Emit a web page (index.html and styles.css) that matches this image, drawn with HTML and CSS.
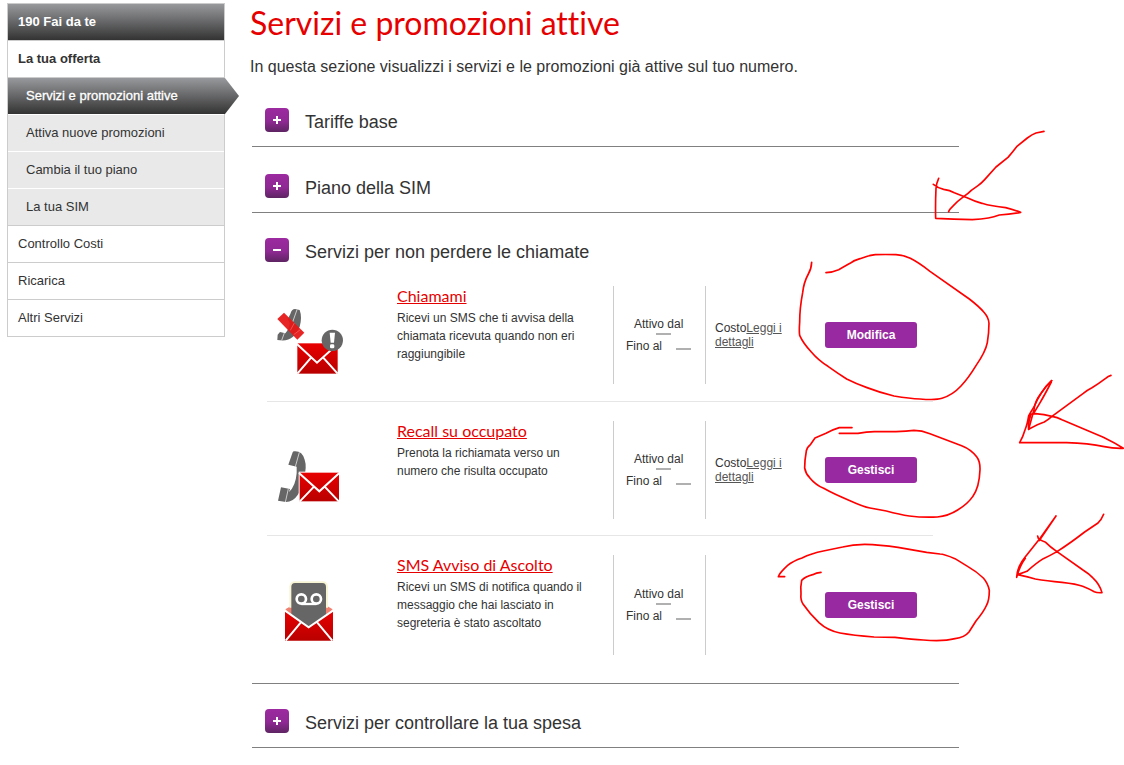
FILE: index.html
```html
<!DOCTYPE html>
<html lang="it">
<head>
<meta charset="utf-8">
<title>Servizi e promozioni attive</title>
<link rel="stylesheet" href="styles.css">
</head>
<body>
<div class="page">
  <nav class="menu" aria-label="190 Fai da te">
    <ul class="menu-list">
      <li class="menu-item menu-head"><a href="#">190 Fai da te</a></li>
      <li class="menu-item menu-strong"><a href="#">La tua offerta</a></li>
      <li class="menu-item menu-sub menu-current"><a href="#" aria-current="page">Servizi e promozioni attive</a></li>
      <li class="menu-item menu-sub"><a href="#">Attiva nuove promozioni</a></li>
      <li class="menu-item menu-sub"><a href="#">Cambia il tuo piano</a></li>
      <li class="menu-item menu-sub menu-sub-last"><a href="#">La tua SIM</a></li>
      <li class="menu-item"><a href="#">Controllo Costi</a></li>
      <li class="menu-item"><a href="#">Ricarica</a></li>
      <li class="menu-item"><a href="#">Altri Servizi</a></li>
    </ul>
  </nav>

  <main class="content">
    <h1 class="title">Servizi e promozioni attive</h1>
    <p class="intro">In questa sezione visualizzi i servizi e le promozioni già attive sul tuo numero.</p>

    <div class="sections">
      <section class="section section-tall">
        <div class="section-head">
          <button class="toggle" type="button" aria-label="Apri Tariffe base"><svg viewBox="0 0 8 8"><path d="M4 0V8M0 4H8"/></svg></button>
          <h2 class="section-title">Tariffe base</h2>
        </div>
      </section>
      <section class="section section-tall">
        <div class="section-head">
          <button class="toggle" type="button" aria-label="Apri Piano della SIM"><svg viewBox="0 0 8 8"><path d="M4 0V8M0 4H8"/></svg></button>
          <h2 class="section-title">Piano della SIM</h2>
        </div>
      </section>
      <section class="section section-open">
        <div class="section-head">
          <button class="toggle" type="button" aria-label="Chiudi Servizi per non perdere le chiamate"><svg viewBox="0 0 8 8"><path d="M0 4H8"/></svg></button>
          <h2 class="section-title">Servizi per non perdere le chiamate</h2>
        </div>

        <div class="services">
          <article class="service">
            <div class="service-icon">
              <svg viewBox="6 0 270 252" aria-hidden="true">
                <defs>
                  <linearGradient id="red" x1="0" y1="0" x2="0" y2="1"><stop offset="0" stop-color="#e80000"/><stop offset="1" stop-color="#b90000"/></linearGradient>
                </defs>
                <path fill="#666" d="M76 42Q80 27 90 27L104 30Q112 52 104 80Q92 104 82 112Q68 125 37 120L38 104L45 96L61 100Q72 88 74 70L68 58Z"/>
                <path stroke="#fff" stroke-width="2" fill="none" d="M96 29L83 66M58 99L50 121"/>
                <path fill="#e71717" opacity=".94" d="M37 57L57 38L118 98L97 119Z"/>
                <path fill="none" stroke="#f16b6b" stroke-width="2" d="M76 91L88 69M86 104L106 89"/>
                <rect x="97" y="130" width="121" height="91" fill="url(#red)"/>
                <path fill="none" stroke="#fff" stroke-width="6" d="M95 131L156 188L219 131M97 221L139 172M218 221L174 172"/>
                <circle cx="202" cy="121" r="32" fill="#666"/>
                <path fill="#fff" d="M194 98H210L207 128H197Z"/><rect x="195" y="133" width="13" height="12" rx="4" fill="#fff"/>
              </svg>
            </div>
            <div class="service-text">
              <h3 class="service-name"><a href="#">Chiamami</a></h3>
              <p>Ricevi un SMS che ti avvisa della chiamata ricevuta quando non eri raggiungibile</p>
            </div>
            <div class="service-dates">
              <p class="date-start">Attivo dal<span class="dash"></span></p>
              <p class="date-end">Fino al<span class="dash"></span></p>
            </div>
            <div class="service-cost"><p>Costo<a href="#">Leggi i dettagli</a></p></div>
            <div class="service-action"><button class="action" type="button">Modifica</button></div>
          </article>

          <article class="service">
            <div class="service-icon">
              <svg viewBox="6 -18 270 252" aria-hidden="true">
                <path fill="#666" d="M83 34Q84 29 91 31Q112 31 119 56Q126 77 117 110Q110 145 98 162Q84 183 63 183L39 179L48 139L75 144L72 153Q92 135 95 96V77L70 71Z"/>
                <path stroke="#fff" stroke-width="2" fill="none" d="M103 34L91 77M70 143L61 184"/>
                <rect x="101" y="92" width="124" height="92" fill="#fff"/>
                <rect x="104" y="95" width="118" height="86" fill="url(#red)"/>
                <path fill="none" stroke="#fff" stroke-width="6" d="M102 96L163 151L223 96M104 182L147 137M222 182L179 137"/>
              </svg>
            </div>
            <div class="service-text">
              <h3 class="service-name"><a href="#">Recall su occupato</a></h3>
              <p>Prenota la richiamata verso un numero che risulta occupato</p>
            </div>
            <div class="service-dates">
              <p class="date-start">Attivo dal<span class="dash"></span></p>
              <p class="date-end">Fino al<span class="dash"></span></p>
            </div>
            <div class="service-cost"><p>Costo<a href="#">Leggi i dettagli</a></p></div>
            <div class="service-action"><button class="action" type="button">Gestisci</button></div>
          </article>

          <article class="service">
            <div class="service-icon">
              <svg viewBox="6 -15 270 252" aria-hidden="true">
                <path fill="#f08070" d="M61 103L82 91H182L203 103L190 120H72Z"/>
                <path fill="url(#red)" d="M60 108L131 158L204 108V197H60Z"/>
                <path fill="#f8f5d5" d="M73 34Q75 19 91 19H173Q187 19 189 34V98H73Z"/>
                <path fill="#666" d="M79 36Q79 24 90 24H172Q183 24 183 36V122L132 157L79 120Z"/>
                <path fill="none" stroke="#fff" stroke-width="6" d="M59 106L131 157L205 106M62 197L107 143M202 197L157 143"/>
                <path fill="none" stroke="#fff" stroke-width="7" d="M109 87H154"/>
                <circle cx="109" cy="72" r="14" fill="#666" stroke="#fff" stroke-width="8"/>
                <circle cx="154" cy="72" r="14" fill="#666" stroke="#fff" stroke-width="8"/>
              </svg>
            </div>
            <div class="service-text">
              <h3 class="service-name"><a href="#">SMS Avviso di Ascolto</a></h3>
              <p>Ricevi un SMS di notifica quando il messaggio che hai lasciato in segreteria è stato ascoltato</p>
            </div>
            <div class="service-dates">
              <p class="date-start">Attivo dal<span class="dash"></span></p>
              <p class="date-end">Fino al<span class="dash"></span></p>
            </div>
            <div class="service-cost"></div>
            <div class="service-action"><button class="action" type="button">Gestisci</button></div>
          </article>
        </div>
      </section>
      <section class="section">
        <div class="section-head">
          <button class="toggle" type="button" aria-label="Apri Servizi per controllare la tua spesa"><svg viewBox="0 0 8 8"><path d="M4 0V8M0 4H8"/></svg></button>
          <h2 class="section-title">Servizi per controllare la tua spesa</h2>
        </div>
      </section>
    </div>
  </main>

  <!-- Freehand red marks over the page -->
  <svg class="marks" viewBox="0 0 1124 765" aria-hidden="true">
    <g transform="translate(780 120) scale(.3333)">
      <path d="M792 34L768 39Q757 43 742 54L710 80Q697 97 684 112L648 141L614 179Q604 190 594 197L574 211Q564 221 551 230Q533 243 518 259Q509 267 506 275"/>
      <path d="M476 175Q469 190 468 206Q466 250 467 295Q520 298 577 299Q605 298 625 294Q642 291 658 285Q690 283 722 277Q700 269 677 263Q635 259 606 250Q585 245 565 235L523 218Q510 211 491 208Q474 204 460 193"/>
      <path d="M95 427Q94 448 85 462Q71 488 68 518Q59 565 59 607Q57 635 59 646Q69 669 94 696Q115 721 144 739Q172 759 200 777Q230 792 261 803Q300 818 342 828Q390 836 420 837Q467 841 486 835Q518 825 543 798Q565 775 588 737Q617 695 622 668Q627 638 627 610Q626 593 612 577Q598 560 568 537L450 454Q415 427 391 415Q370 405 348 404Q316 403 286 404Q266 406 240 416Q222 421 210 430Q189 442 176 449Q157 457 138 458"/>
    </g>
    <g transform="translate(770 370) scale(.3333)">
      <path d="M1023 16Q1015 18 1007 25Q986 41 966 53Q952 60 940 70L846 139Q832 151 823 156Q805 162 776 178Q774 154 783 133Q788 131 796 131Q823 133 846 139Q862 142 876 149L1000 202Q1035 219 1060 235Q1030 236 1003 230Q955 220 890 218H749Q759 201 765 180Q772 164 776 138Q784 123 792 111Q812 63 845 32"/>
      <path d="M845 32Q827 48 811 73Q795 94 792 119L776 178M844 36Q824 75 809 100L791 130"/>
      <path d="M246 173H208Q190 178 168 190L135 204Q126 217 122 223Q110 233 109 243Q104 270 104 294Q107 311 119 323Q136 344 161 355Q195 374 240 392Q280 410 300 414L349 423Q390 434 418 438Q458 443 502 441Q535 438 563 420Q593 402 608 380Q628 353 630 300Q631 274 620 260Q603 238 575 227L480 191Q455 181 432 181Q410 184 378 185H313Q290 185 264 190H208"/>
      <path d="M153 607Q139 608 128 614Q106 620 95 631Q91 650 93 671Q91 690 99 702Q118 730 147 758Q173 782 210 789Q250 796 312 801L375 802Q430 808 460 810Q520 815 555 806Q584 802 597 786L618 753Q642 724 650 705Q658 691 658 661Q654 640 640 624Q620 605 594 590L555 566Q522 552 510 552L470 547L384 532Q330 524 284 523Q248 523 218 531L160 543Q124 550 96 564Q69 573 53 586Q28 609 25 620H44"/>
      <path d="M1001 433Q995 449 983 460L944 486Q900 520 861 545Q842 556 820 566Q798 580 771 604Q757 609 743 614Q771 620 796 627Q830 633 876 637Q920 642 938 649Q960 658 973 665Q981 669 996 668Q990 644 968 623Q958 612 939 600L861 545Q840 530 827 517Q813 512 805 505L803 498M808 512L858 438L811 504L765 562Q742 590 740 622Q749 588 766 565"/>
    </g>
  </svg>
</div>
</body>
</html>
```
FILE: styles.css
```css
* {
  box-sizing: border-box;
}

body {
  margin: 0;
  background: #fff;
  color: #333;
  font: 12px/18px "Liberation Sans", Arial, sans-serif;
}

h1, h2, h3, p, ul {
  margin: 0;
  padding: 0;
  font-weight: normal;
}

.page {
  position: relative;
  display: flex;
  align-items: flex-start;
  gap: 25px;
  padding: 3px 165px 0 7px;
}

/* Side menu */
.menu {
  flex: 0 0 218px;
}

.menu-list {
  list-style: none;
  border: 1px solid #ccc;
  border-bottom: 0;
}

.menu-item {
  border-bottom: 1px solid #ccc;
}

.menu-item a {
  display: block;
  padding: 0 10px;
  color: #333;
  font-size: 13px;
  line-height: 36px;
  text-decoration: none;
}

.menu-item.menu-head a,
.menu-item.menu-current a {
  background: linear-gradient(#98999c, #333);
  color: #fff;
}

.menu-head a,
.menu-strong a {
  font-weight: bold;
}

.menu-sub {
  border-bottom-color: #fff;
}

.menu-item.menu-sub a {
  padding-left: 18px;
}

.menu-sub:not(.menu-current) a {
  background: #e9e9e9;
}

.menu-sub-last {
  border-bottom-color: #ccc;
}

.menu-current {
  position: relative;
}

.menu-current a {
  -webkit-text-stroke: 0.3px #fff;
}

.menu-current::after {
  content: "";
  position: absolute;
  top: 0;
  left: 100%;
  width: 15px;
  height: 36px;
  background: linear-gradient(#98999c, #333);
  clip-path: polygon(0 0, 1px 0, 100% 50%, 1px 100%, 0 100%);
}

/* Main column */
.content {
  flex: 1;
  min-width: 0;
}

.title {
  color: #e60000;
  font: 32px/40px Lato, sans-serif;
  font-variant-ligatures: none;
}

.intro {
  margin-top: 12px;
  font-size: 16px;
  line-height: 24px;
}

.sections {
  margin: 2px 0 0 2px;
}

.section {
  padding-top: 25px;
  border-bottom: 1px solid #808080;
}

.section-tall {
  padding-top: 27px;
}

.section-head {
  display: flex;
  align-items: center;
  gap: 16px;
  padding: 0 0 14px 13px;
}

.section-open .section-head {
  padding-bottom: 5px;
}

.toggle {
  display: grid;
  place-items: center;
  width: 24px;
  height: 24px;
  padding: 0;
  border: 0;
  border-radius: 4px;
  background: linear-gradient(#9c2aa0, #8f2994 55%, #5e2462);
}

.toggle svg {
  width: 8px;
  height: 8px;
  stroke: #fff;
  stroke-width: 2;
}

.section-title {
  padding-top: 4px;
  font-size: 18px;
  line-height: 20px;
}

/* Service rows */
.services {
  margin: 0 26px 0 15px;
}

.service {
  display: grid;
  grid-template-columns: 130px 1fr 93px 119px 108px;
  min-height: 134px;
  padding: 19px 0 16px;
  border-bottom: 1px solid #e6e6e6;
}

.service:first-child {
  min-height: 135px;
  padding-bottom: 17px;
}

.service:last-child {
  min-height: 147px;
  padding-bottom: 28px;
  border-bottom: 0;
}

.service-icon,
.service-cost,
.service-action {
  display: flex;
  align-items: center;
}

.service-icon {
  padding-top: 14px;
}

.service-icon svg {
  width: 90px;
  height: 84px;
}

.service-text {
  padding-right: 20px;
}

.service-name {
  margin-bottom: 3px;
  font: 16px/20px Lato, sans-serif;
}

.service-name a {
  color: #e60000;
}

.service-dates {
  display: flex;
  flex-direction: column;
  justify-content: center;
  gap: 2px;
  border: solid #ccc;
  border-width: 0 1px;
  padding-left: 12px;
}

.date-start {
  padding-left: 8px;
}

.date-start .dash {
  display: block;
  margin-left: 22px;
}

.date-end {
  display: flex;
  align-items: center;
  gap: 14px;
}

.dash {
  width: 15px;
  height: 2px;
  background: #b0b0b0;
}

.date-end .dash {
  margin-top: 6px;
}

.service-cost {
  padding: 0 24px 0 9px;
  line-height: 14px;
}

.service-cost a {
  color: #555;
}

.action {
  width: 92px;
  height: 26px;
  padding: 0;
  border: 0;
  border-radius: 3px;
  background: #9829a0;
  color: #fff;
  font: bold 12px/26px "Liberation Sans", Arial, sans-serif;
}

/* Freehand marks */
.marks {
  position: absolute;
  top: 0;
  left: 0;
  width: 1124px;
  height: 765px;
  fill: none;
  stroke: #f00;
  stroke-width: 5;
  stroke-linecap: round;
  stroke-linejoin: round;
  pointer-events: none;
}
```
